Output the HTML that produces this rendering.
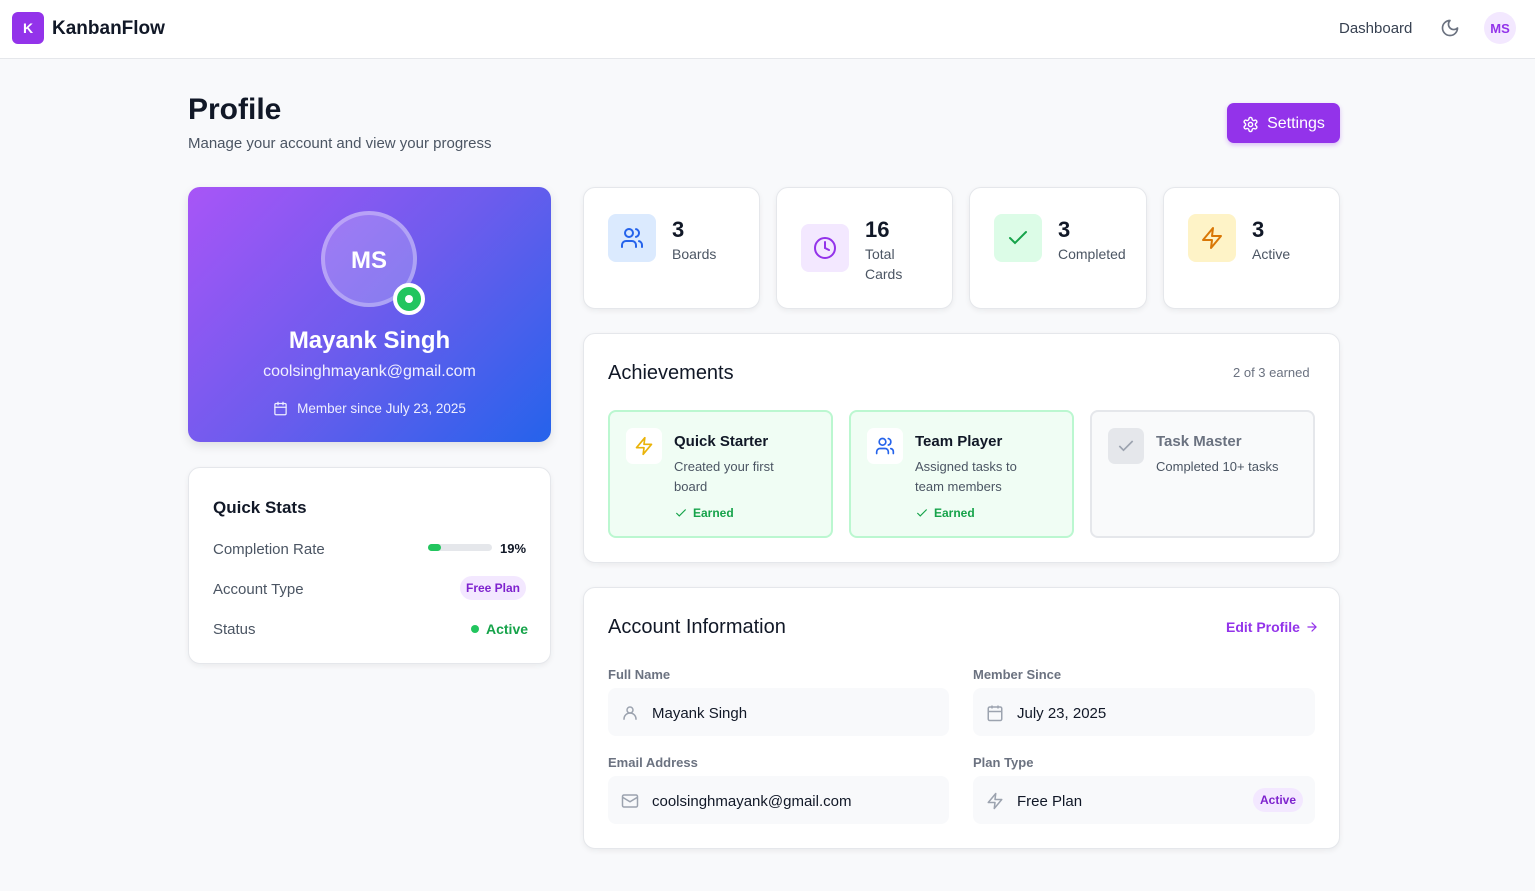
<!DOCTYPE html>
<html><head><meta charset="utf-8"><style>
*{box-sizing:border-box;margin:0;padding:0}
body{width:1535px;height:891px;background:#f8f9fb;font-family:"Liberation Sans",sans-serif;color:#111827;position:relative;overflow:hidden}
.a{position:absolute}
.card{position:absolute;background:#fff;border:1px solid #e5e7eb;border-radius:12px;box-shadow:0 2px 6px rgba(0,0,0,.06)}
svg{display:block}
.ib{position:absolute;width:48px;height:48px;border-radius:8px;display:flex;align-items:center;justify-content:center}
.num{position:absolute;font-size:22px;font-weight:700;color:#111827}
.lbl{position:absolute;font-size:14px;color:#4b5563;line-height:20px}
.ach{position:absolute;top:410px;width:225px;height:128px;border:2px solid #bbf7d0;background:#f0fdf4;border-radius:8px}
.ach .ic{position:absolute;left:16px;top:16px;width:36px;height:36px;border-radius:7px;background:#fff;display:flex;align-items:center;justify-content:center}
.ach .t{position:absolute;left:64px;top:21px;font-size:15px;font-weight:700;color:#111827}
.ach .d{position:absolute;left:64px;top:45px;font-size:13px;color:#4b5563;line-height:20px;width:122px}
.ach .e{position:absolute;left:64px;top:94px;font-size:12px;color:#16a34a;font-weight:700;display:flex;align-items:center;gap:5px}
.fl{position:absolute;font-size:13px;color:#6b7280;font-weight:700}
.fv{position:absolute;height:48px;background:#f8f9fb;border-radius:8px;display:flex;align-items:center;padding-left:13px;font-size:15px;color:#111827;gap:13px}
</style></head><body>
<div class="a" style="left:0;top:0;width:1535px;height:59px;background:#fff;border-bottom:1px solid #e5e7eb"></div>
<div class="a" style="left:12px;top:12px;width:32px;height:32px;border-radius:6px;background:#9333ea;color:#fff;font-weight:700;font-size:14px;display:flex;align-items:center;justify-content:center">K</div>
<div class="a" style="left:52px;top:18px;font-size:19px;font-weight:700">KanbanFlow</div>
<div class="a" style="left:1339px;top:20px;font-size:15px;color:#374151">Dashboard</div>
<svg class="a" style="left:1440px;top:18px" width="20" height="20" viewBox="0 0 24 24" fill="none" stroke="#6b7280" stroke-width="2" stroke-linecap="round" stroke-linejoin="round"><path d="M12 3a6 6 0 0 0 9 9 9 9 0 1 1-9-9Z"/></svg>
<div class="a" style="left:1484px;top:12px;width:32px;height:32px;border-radius:50%;background:#f3e8ff;color:#9333ea;font-weight:700;font-size:13px;display:flex;align-items:center;justify-content:center">MS</div>

<div class="a" style="left:188px;top:93px;font-size:30px;font-weight:700">Profile</div>
<div class="a" style="left:188px;top:135px;font-size:15px;color:#4b5563">Manage your account and view your progress</div>
<div class="a" style="left:1227px;top:103px;width:113px;height:40px;border-radius:7px;background:#9333ea;color:#fff;font-size:16px;display:flex;align-items:center;justify-content:center;gap:8px;padding-top:2px;box-shadow:0 2px 5px rgba(147,51,234,.3)"><svg width="17" height="17" viewBox="0 0 24 24" fill="none" stroke="#fff" stroke-width="2" stroke-linecap="round" stroke-linejoin="round"><path d="M12.22 2h-.44a2 2 0 0 0-2 2v.18a2 2 0 0 1-1 1.730l-.43.25a2 2 0 0 1-2 0l-.15-.08a2 2 0 0 0-2.73.73l-.22.38a2 2 0 0 0 .73 2.73l.15.1a2 2 0 0 1 1 1.72v.51a2 2 0 0 1-1 1.74l-.15.09a2 2 0 0 0-.73 2.73l.22.38a2 2 0 0 0 2.73.73l.15-.08a2 2 0 0 1 2 0l.43.25a2 2 0 0 1 1 1.73V20a2 2 0 0 0 2 2h.44a2 2 0 0 0 2-2v-.18a2 2 0 0 1 1-1.73l.43-.25a2 2 0 0 1 2 0l.15.08a2 2 0 0 0 2.73-.73l.22-.39a2 2 0 0 0-.73-2.73l-.15-.08a2 2 0 0 1-1-1.74v-.5a2 2 0 0 1 1-1.74l.15-.09a2 2 0 0 0 .73-2.73l-.22-.38a2 2 0 0 0-2.73-.73l-.15.08a2 2 0 0 1-2 0l-.43-.25a2 2 0 0 1-1-1.73V4a2 2 0 0 0-2-2z"/><circle cx="12" cy="12" r="3"/></svg>Settings</div>

<div class="a" style="left:188px;top:187px;width:363px;height:255px;border-radius:12px;background:linear-gradient(135deg,#a855f7 0%,#6d5ced 50%,#2563eb 100%);box-shadow:0 4px 10px rgba(0,0,0,.1)"></div>
<div class="a" style="left:321px;top:211px;width:96px;height:96px;border-radius:50%;background:rgba(255,255,255,.2);border:4px solid rgba(255,255,255,.3);color:#fff;font-weight:700;font-size:24px;display:flex;align-items:center;justify-content:center;padding-top:3px">MS</div>
<div class="a" style="left:393px;top:283px;width:32px;height:32px;border-radius:50%;background:#22c55e;border:4px solid #fff;display:flex;align-items:center;justify-content:center"><div style="width:8px;height:8px;border-radius:50%;background:#fff"></div></div>
<div class="a" style="left:188px;top:327px;width:363px;text-align:center;color:#fff;font-size:24px;font-weight:700">Mayank Singh</div>
<div class="a" style="left:188px;top:363px;width:363px;text-align:center;color:#f1f0ff;font-size:16px">coolsinghmayank@gmail.com</div>
<div class="a" style="left:188px;top:401px;width:363px;display:flex;justify-content:center;align-items:center;gap:9px;color:#eef;font-size:13.5px"><svg width="15" height="15" viewBox="0 0 24 24" fill="none" stroke="#eef" stroke-width="2" stroke-linecap="round"><rect x="3" y="4" width="18" height="18" rx="2"/><path d="M16 2v4M8 2v4M3 10h18"/></svg>Member since July 23, 2025</div>

<div class="card" style="left:188px;top:467px;width:363px;height:197px"></div>
<div class="a" style="left:213px;top:498px;font-size:17px;font-weight:700">Quick Stats</div>
<div class="a" style="left:213px;top:541px;font-size:15px;color:#4b5563">Completion Rate</div>
<div class="a" style="left:428px;top:544px;width:64px;height:7px;border-radius:4px;background:#e5e7eb"><div style="width:13px;height:7px;border-radius:4px;background:#22c55e"></div></div>
<div class="a" style="left:500px;top:541px;font-size:13px;font-weight:700">19%</div>
<div class="a" style="left:213px;top:581px;font-size:15px;color:#4b5563">Account Type</div>
<div class="a" style="left:460px;top:576px;width:66px;height:24px;border-radius:12px;background:#f3e8ff;color:#7e22ce;font-size:12px;font-weight:700;display:flex;align-items:center;justify-content:center">Free Plan</div>
<div class="a" style="left:213px;top:621px;font-size:15px;color:#4b5563">Status</div>
<div class="a" style="left:471px;top:625px;width:8px;height:8px;border-radius:50%;background:#22c55e"></div>
<div class="a" style="left:486px;top:621px;font-size:14px;font-weight:700;color:#16a34a">Active</div>

<div class="card" style="left:583px;top:187px;width:177px;height:122px"></div>
<div class="card" style="left:776px;top:187px;width:177px;height:122px"></div>
<div class="card" style="left:969px;top:187px;width:178px;height:122px"></div>
<div class="card" style="left:1163px;top:187px;width:177px;height:122px"></div>
<div class="ib" style="left:608px;top:214px;background:#dbeafe"><svg width="24" height="24" viewBox="0 0 24 24" fill="none" stroke="#2563eb" stroke-width="2" stroke-linecap="round"><path d="M16 21v-2a4 4 0 0 0-4-4H6a4 4 0 0 0-4 4v2"/><circle cx="9" cy="7" r="4"/><path d="M22 21v-2a4 4 0 0 0-3-3.87M16 3.13a4 4 0 0 1 0 7.75"/></svg></div>
<div class="num" style="left:672px;top:217px">3</div><div class="lbl" style="left:672px;top:244px">Boards</div>
<div class="ib" style="left:801px;top:224px;background:#f3e8ff"><svg width="24" height="24" viewBox="0 0 24 24" fill="none" stroke="#9333ea" stroke-width="2" stroke-linecap="round"><circle cx="12" cy="12" r="10"/><path d="M12 6v6l4 2"/></svg></div>
<div class="num" style="left:865px;top:217px">16</div><div class="lbl" style="left:865px;top:244px">Total<br>Cards</div>
<div class="ib" style="left:994px;top:214px;background:#dcfce7"><svg width="24" height="24" viewBox="0 0 24 24" fill="none" stroke="#16a34a" stroke-width="2" stroke-linecap="round"><path d="M20 6 9 17l-5-5"/></svg></div>
<div class="num" style="left:1058px;top:217px">3</div><div class="lbl" style="left:1058px;top:244px">Completed</div>
<div class="ib" style="left:1188px;top:214px;background:#fef3c7"><svg width="24" height="24" viewBox="0 0 24 24" fill="none" stroke="#d97706" stroke-width="2" stroke-linejoin="round"><path d="M13 2 3 14h9l-1 8 10-12h-9l1-8z"/></svg></div>
<div class="num" style="left:1252px;top:217px">3</div><div class="lbl" style="left:1252px;top:244px">Active</div>

<div class="card" style="left:583px;top:333px;width:757px;height:230px"></div>
<div class="a" style="left:608px;top:362px;font-size:20px;color:#111827">Achievements</div>
<div class="a" style="left:1233px;top:365px;font-size:13px;color:#6b7280">2 of 3 earned</div>
<div class="ach" style="left:608px"><div class="ic"><svg width="20" height="20" viewBox="0 0 24 24" fill="none" stroke="#eab308" stroke-width="2" stroke-linejoin="round"><path d="M13 2 3 14h9l-1 8 10-12h-9l1-8z"/></svg></div><div class="t">Quick Starter</div><div class="d">Created your first board</div><div class="e"><svg width="14" height="14" viewBox="0 0 24 24" fill="none" stroke="#16a34a" stroke-width="2"><path d="M20 6 9 17l-5-5"/></svg>Earned</div></div>
<div class="ach" style="left:849px"><div class="ic"><svg width="20" height="20" viewBox="0 0 24 24" fill="none" stroke="#2563eb" stroke-width="2" stroke-linecap="round"><path d="M16 21v-2a4 4 0 0 0-4-4H6a4 4 0 0 0-4 4v2"/><circle cx="9" cy="7" r="4"/><path d="M22 21v-2a4 4 0 0 0-3-3.87M16 3.13a4 4 0 0 1 0 7.75"/></svg></div><div class="t">Team Player</div><div class="d" style="width:118px">Assigned tasks to team members</div><div class="e"><svg width="14" height="14" viewBox="0 0 24 24" fill="none" stroke="#16a34a" stroke-width="2"><path d="M20 6 9 17l-5-5"/></svg>Earned</div></div>
<div class="ach" style="left:1090px;border-color:#e5e7eb;background:#f9fafb"><div class="ic" style="background:#e5e7eb"><svg width="20" height="20" viewBox="0 0 24 24" fill="none" stroke="#9ca3af" stroke-width="2"><path d="M20 6 9 17l-5-5"/></svg></div><div class="t" style="color:#6b7280">Task Master</div><div class="d" style="width:150px">Completed 10+ tasks</div></div>

<div class="card" style="left:583px;top:587px;width:757px;height:262px"></div>
<div class="a" style="left:608px;top:616px;font-size:20px">Account Information</div>
<div class="a" style="left:1226px;top:619px;font-size:14px;color:#9333ea;font-weight:700;display:flex;align-items:center;gap:5px">Edit Profile<svg width="14" height="14" viewBox="0 0 24 24" fill="none" stroke="#9333ea" stroke-width="2" stroke-linecap="round"><path d="M5 12h14M12 5l7 7-7 7"/></svg></div>
<div class="fl" style="left:608px;top:667px">Full Name</div>
<div class="fl" style="left:973px;top:667px">Member Since</div>
<div class="fl" style="left:608px;top:755px">Email Address</div>
<div class="fl" style="left:973px;top:755px">Plan Type</div>
<div class="fv" style="left:608px;top:688px;width:341px;padding-top:2px"><svg width="18" height="18" viewBox="0 0 24 24" fill="none" stroke="#9ca3af" stroke-width="2"><circle cx="12" cy="8" r="4"/><path d="M4 21v-1a7 7 0 0 1 16 0v1"/></svg>Mayank Singh</div>
<div class="fv" style="left:973px;top:688px;width:342px;padding-top:2px"><svg width="18" height="18" viewBox="0 0 24 24" fill="none" stroke="#9ca3af" stroke-width="2"><rect x="3" y="4" width="18" height="18" rx="2"/><path d="M16 2v4M8 2v4M3 10h18"/></svg>July 23, 2025</div>
<div class="fv" style="left:608px;top:776px;width:341px;padding-top:2px"><svg width="18" height="18" viewBox="0 0 24 24" fill="none" stroke="#9ca3af" stroke-width="2"><rect x="2" y="4" width="20" height="16" rx="2"/><path d="m22 7-10 6L2 7"/></svg>coolsinghmayank@gmail.com</div>
<div class="fv" style="left:973px;top:776px;width:342px;padding-top:2px"><svg width="18" height="18" viewBox="0 0 24 24" fill="none" stroke="#9ca3af" stroke-width="2" stroke-linejoin="round"><path d="M13 2 3 14h9l-1 8 10-12h-9l1-8z"/></svg>Free Plan<div style="position:absolute;right:12px;top:12px;width:50px;height:24px;border-radius:12px;background:#f3e8ff;color:#7e22ce;font-size:12px;font-weight:700;display:flex;align-items:center;justify-content:center">Active</div></div>
</body></html>
